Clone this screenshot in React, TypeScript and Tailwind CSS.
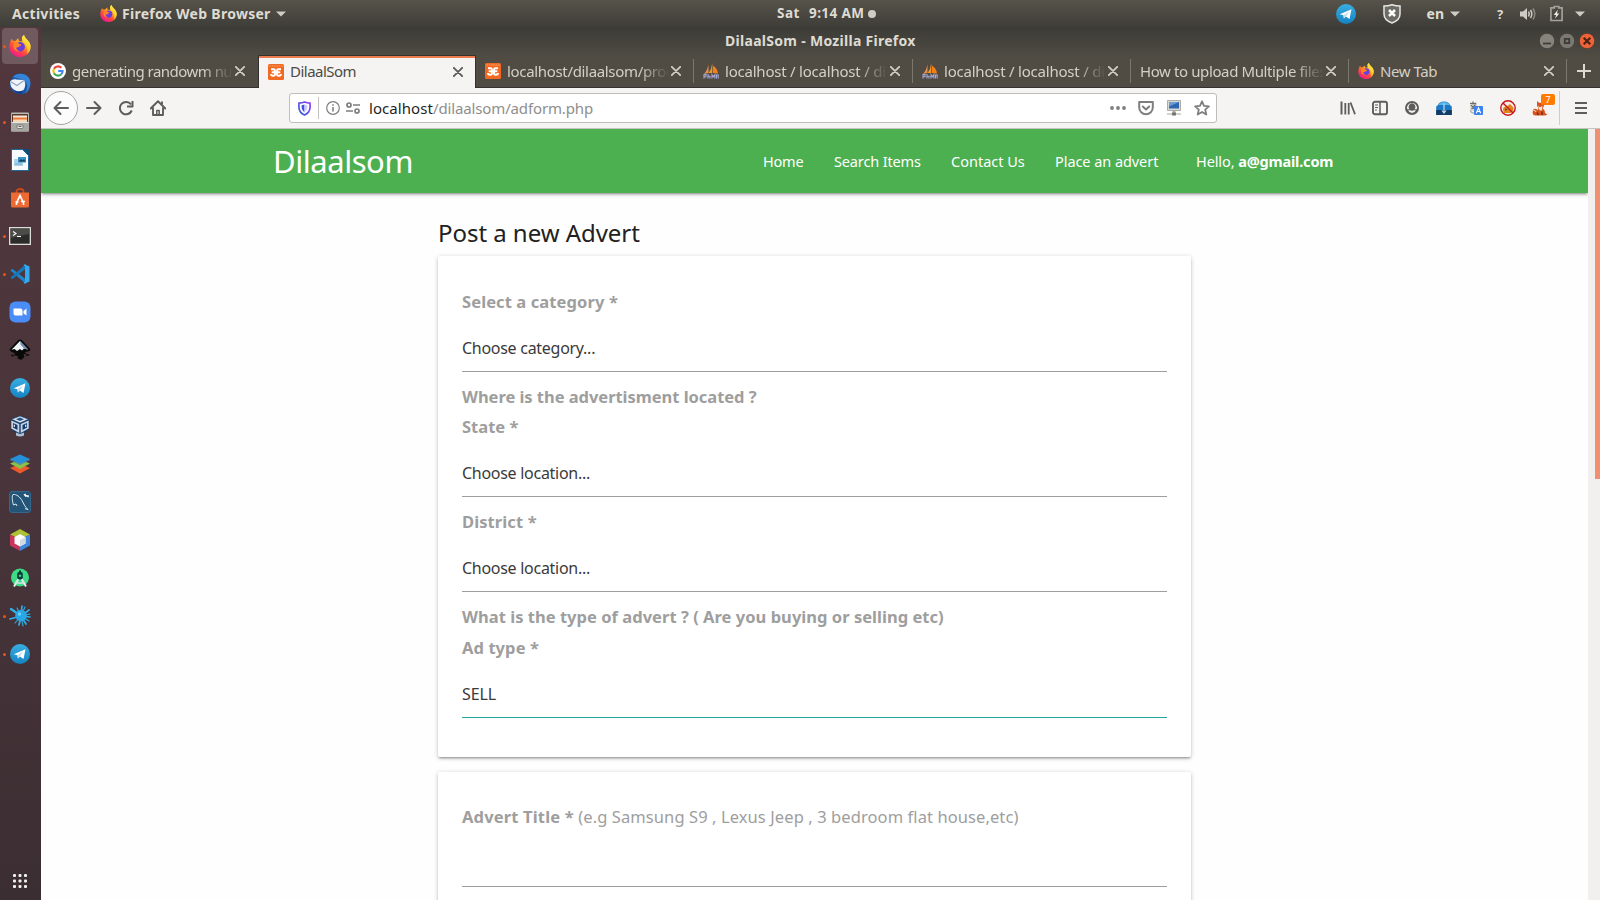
import type { ReactNode } from "react";

type IconProps = { className?: string };

function Firefox({ className = "size-4" }: IconProps) {
  return (
    <svg viewBox="0 0 24 24" className={className}>
      <defs>
        <linearGradient id="fxBody" x1="0.85" y1="0.05" x2="0.25" y2="1">
          <stop offset="0" stopColor="#fff34a" />
          <stop offset="0.35" stopColor="#ffab1f" />
          <stop offset="0.65" stopColor="#ff4a3c" />
          <stop offset="1" stopColor="#f0129b" />
        </linearGradient>
        <linearGradient id="fxWing" x1="0.8" y1="0" x2="0.4" y2="1">
          <stop offset="0" stopColor="#fff44f" />
          <stop offset="0.6" stopColor="#ffcb2c" />
          <stop offset="1" stopColor="#ff8a1c" />
        </linearGradient>
      </defs>
      <path d="M3.2 4.2c.2 1 .6 1.7 1.2 2.3.9-.4 2-.4 3 0C8.200 5 9.200 4 10.600 3.600c-.5 1-.3 2.300.5 3.200h4L14 2.500C15 1.200 15.800.6 16.500.1c.1 2 1.500 3.200 3 4.700 2.600 2.500 4.200 5 4 8.600C23.200 19.500 18.300 24 12.200 24 5.500 24 .3 19 .4 12.700c0-2 .4-3.900 1.300-5.500.1-1.200.7-2.300 1.500-3z" fill="url(#fxBody)" />
      <circle cx="12.300" cy="12.800" r="5.100" fill="#6c3fdc" />
      <path d="M7 8c2 .1 3.300.6 4 1.800 1 .3 2.300.4 2.500.9-.2 1-1.700 1.200-2.400 1.900-.7.800-2 1-3.200.9-.1 2 1.500 3.800 4 4.100-3.700.7-6.900-1.500-7.100-4.900C4.700 10.600 5.500 9 7 8z" fill="#ff8424" />
      <path d="M16.500.1c.1 2 1.500 3.200 3 4.700 2.600 2.500 4.200 5 4 8.600-.2 3.200-1.700 6-4.200 8 1-3 .9-4.500.3-6.400-.1-2.500-1.200-5.300-4-7.200C13.800 6.200 13.200 2.900 16.500.1z" fill="url(#fxWing)" />
    </svg>
  );
}

function Telegram({ className = "size-5" }: IconProps) {
  return (
    <svg viewBox="0 0 24 24" className={className}>
      <defs>
        <linearGradient id="tgBlue" x1="0" y1="0" x2="0" y2="1">
          <stop offset="0" stopColor="#38aee2" />
          <stop offset="1" stopColor="#1583c2" />
        </linearGradient>
      </defs>
      <circle cx="12" cy="12" r="12" fill="url(#tgBlue)" />
      <path d="M4.500 12.200 18.600 6.300 16.200 18l-4.400-3.100-2.300 2.600-.6-4z" fill="#fff" />
      <path d="m8.900 13.500 7.200-4.900-4.300 6.300-2.300 2.600z" fill="#c4dcec" />
    </svg>
  );
}

function Thunderbird() {
  return (
    <svg viewBox="0 0 22 22" className="size-[22px]">
      <path d="M3 5Q5 .5 11 .5q10 .5 10.500 10Q21 20 12.500 21.500 4 21 1 14q-1-5 2-9z" fill="#1b56a8" />
      <path d="M4 4C8-1 17 0 20 5c3 5 1 12-4 16 3-6 3-9 0-13C13 5 8 6 4 4z" fill="#3583d6" />
      <path d="M1 8.500C3 6.500 5 6 7 6.500l8 .5c2 3 1.500 8-1 10.500-5 2-9.500 0-12-4z" fill="#f1f3f6" />
      <path d="m1.500 8.500 6.500 4 7-5" fill="none" stroke="#8ea6c4" strokeWidth="1.100" />
      <path d="M5 17.500c3 1.500 6 1.500 9 0l-1 3.500c-4 .5-6-1-8-3.500z" fill="#123f87" />
    </svg>
  );
}

function Files() {
  return (
    <svg viewBox="0 0 20 20" className="size-5">
      <rect x="1" y=".5" width="18" height="19" rx="1" fill="#b9b9b3" />
      <rect x="2" y="2" width="16" height="8" fill="#5a3a26" />
      <path d="M3 3.500h14V6H3z" fill="#f3e9dc" />
      <path d="M3 5.500h14v3H3z" fill="#ef7a35" />
      <path d="M3 7.500h14V10H3z" fill="#f8d7b5" />
      <rect x="1" y="10" width="18" height="9.500" rx="1" fill="#a8a8a3" />
      <path d="M1.500 10.500h17" stroke="#e4e4e0" />
      <path d="M7 13h6v2.500q0 1-1 1H8q-1 0-1-1z" fill="#e9e9e6" stroke="#6c6c68" strokeWidth=".8" />
      <path d="M8.500 14.500h3" stroke="#62625e" />
    </svg>
  );
}

function Writer() {
  return (
    <svg viewBox="0 0 18 22" className="h-[22px] w-[18px]">
      <path d="M.5.500h11l6 6v15H.5z" fill="#f8fafc" stroke="#1d6a9c" />
      <path d="M11.500 0H18v7z" fill="#0f4c78" />
      <path d="M3 10h9v7H3z" fill="#a8d3ea" />
      <path d="M7 8h8v5.500H7z" fill="#3a93c2" />
      <path d="M7.500 12.500 10 10l1.500 1.500L13 10l1.500 2.500z" fill="#0f3f55" />
      <path d="M4 15h7" stroke="#6caed0" />
    </svg>
  );
}

function Software() {
  return (
    <svg viewBox="0 0 20 20" className="size-5">
      <path d="M6.500 6V3.500Q6.500 1 10 1t3.500 2.500V6" fill="none" stroke="#c8481a" strokeWidth="1.800" />
      <path d="M1 4.500h18V18q0 1.500-1.500 1.500h-15Q1 19.500 1 18z" fill="#ee6a33" />
      <path d="M6.500 15 10 7.500l3.500 7.500" fill="none" stroke="#fff" strokeWidth="1.700" />
      <path d="M5.500 14h3M11 13.500h4" stroke="#fff" strokeWidth="1.500" />
      <circle cx="6.500" cy="16" r="1" fill="#fff" /><circle cx="13.500" cy="16" r="1" fill="#fff" />
    </svg>
  );
}

function Terminal() {
  return (
    <svg viewBox="0 0 22 18" className="h-[18px] w-[22px]">
      <rect x=".5" y=".5" width="21" height="17" fill="#2c2c2a" stroke="#deded8" strokeWidth="1.600" />
      <path d="M2 2h18v5L2 11z" fill="#4b4b48" />
      <path d="m4 4.500 3 2-3 2M8 9.500h4" fill="none" stroke="#fff" strokeWidth="1.100" />
    </svg>
  );
}

function VsCode() {
  return (
    <svg viewBox="0 0 20 20" className="size-5">
      <path d="m.5 6.500 1.800-1.700L16 15.500V20z" fill="#1b87cf" />
      <path d="M.5 13.500 2.300 15.200 16 4.500V0z" fill="#1677b8" />
      <path d="M14.500.3 19.500 2.500v15l-5 2.200-1-.8 1.500-1.500v-15L13.500 1z" fill="#35a9f0" />
    </svg>
  );
}

function Zoom() {
  return (
    <svg viewBox="0 0 22 22" className="size-[22px]">
      <rect x=".5" y=".5" width="21" height="21" rx="6" fill="#4a8df8" />
      <path d="M4.500 7.500h7q2 0 2 2v5h-7q-2 0-2-2zM14.500 10l3-2.500v7l-3-2z" fill="#fff" />
    </svg>
  );
}

function Inkscape() {
  return (
    <svg viewBox="0 0 22 22" className="size-[22px]">
      <path d="M11 .5q1.500 0 2.500 1.200l7.500 8q1 1.800-1.500 2.600l-4 1 2.500 1.300-3.500 1 1 2.400L12 21l-4-2 1.500-1.500-5-1.500 2-1.200-4-2Q-.2 11.500 1 9.700l7.500-8Q9.500.5 11 .5z" fill="#090909" />
      <path d="M11 2 19 10.500l-4-1-2 2-2-1.500-3 2-2.500-2-3 .8z" fill="#eef2f6" />
      <path d="M11 2 19 10.500l-4-1-3.500-4z" fill="#6f8db0" />
      <ellipse cx="18.500" cy="16" rx="2" ry="1" fill="#111" />
      <ellipse cx="3.500" cy="16.500" rx="1.500" ry=".9" fill="#111" />
    </svg>
  );
}

function VirtualBox() {
  return (
    <svg viewBox="0 0 20 22" className="h-[22px] w-5">
      <path d="M10 .5 19 4v10l-9 7.500L1 14V4z" fill="#173a67" />
      <path d="M10 1 18.500 4.300 10 8 1.500 4.300z" fill="#dbe5f1" stroke="#173a67" strokeWidth=".6" />
      <path d="m6 4.300 4-1.700 4 1.700L10 6z" fill="#28517f" />
      <path d="M1.300 5.500 9.300 9v9L1.300 13.500zM18.700 5.500 10.700 9v9l8-4.500z" fill="#c6d6e8" />
      <path d="m3 8 4.500 2v5L3 12.500zM12.500 10 17 8v4.500L12.500 15z" fill="#173a67" />
      <path d="M4.300 9.800v2M15.700 9.800v2" stroke="#fff" strokeWidth="1.200" />
      <path d="M6 17.500 10 19l4-1.500v3q-4 2-8 0z" fill="#aebfd3" />
    </svg>
  );
}

function Stacks() {
  return (
    <svg viewBox="0 0 20 20" className="size-5">
      <path d="m0 14 10-4 10 4-10 5.500z" fill="#ee5a29" />
      <path d="m0 9.500 10-4 10 4-10 5.500z" fill="#8cc04b" />
      <path d="M0 5 10 .5 20 5l-10 5z" fill="#2490dc" />
      <path d="m0 5 10 5 10-5v1l-10 5L0 6z" fill="#4d83a9" />
    </svg>
  );
}

function Workbench() {
  return (
    <svg viewBox="0 0 22 22" className="size-[22px]">
      <rect x=".5" y=".5" width="21" height="21" rx="2.500" fill="#245478" stroke="#34678c" />
      <path d="M4.500 14C3 9 2.800 5 4 3.500 7.500 3 11 6 13 9.500s2.500 6 6 9l-3-.8M4.500 14l2.500-1 1 2" fill="none" stroke="#dde9f1" strokeWidth="1" />
      <path d="m14.500 3.500 2-1 .5 1.500 3 .5-.5 2-2-1-1 .5z" fill="#fff" />
    </svg>
  );
}

function NetBeans() {
  return (
    <svg viewBox="0 0 20 22" className="h-[22px] w-5">
      <path d="M10 0 20 5.500 15 8l-5-2.500L5 8 0 5.500z" fill="#adc335" />
      <path d="M0 5.500 5 8v6.500l5 2.500v5L0 16.500z" fill="#c8355d" />
      <path d="M20 5.500 15 8v6.500L10 17v5l10-5.500z" fill="#3f87dd" />
      <path d="m10 5 5.500 3v6.500L10 17.500l-5.500-3V8z" fill="#fbfbfb" />
      <path d="M10 11v6.500l5.500-3V8z" fill="#d4dbe0" />
    </svg>
  );
}

function AndroidStudio() {
  return (
    <svg viewBox="0 0 20 20" className="size-5">
      <circle cx="10" cy="9.500" r="9" fill="#3ddc84" />
      <path d="m9 10-5 8.500M11 10l5 8.500" stroke="#e4eef2" strokeWidth="2" />
      <path d="M5.500 14q4.500 2.500 9 0" fill="none" stroke="#cfe0e6" strokeWidth="1.500" />
      <rect x="7.200" y="4" width="5.600" height="7.500" rx="2" fill="#083b3d" />
      <path d="M9 2.500h2v2H9z" fill="#083b3d" />
      <circle cx="10" cy="7.800" r="1.200" fill="#3ddc84" />
    </svg>
  );
}

function Splat() {
  return (
    <svg viewBox="0 0 22 22" className="size-[22px]">
      <g stroke="#2fb0e8" strokeLinecap="round">
        <path d="m12 11-10-7" strokeWidth="2.400" />
        <path d="M12 11 1 14M12 11l8-6M12 11l9 1M12 11l1-10M12 11l5 8M12 11l-2 9" strokeWidth="1.700" />
        <path d="m12 11-6 7M12 11 8 3M12 11l9-2M12 11l8 5M12 11l4-9M12 11l2 10" strokeWidth="1.100" />
      </g>
      <circle cx="12" cy="10.500" r="5.800" fill="#27a7e6" />
      <circle cx="10.500" cy="9" r="1.800" fill="#6bcbf5" />
    </svg>
  );
}

function Grid() {
  return (
    <svg viewBox="0 0 14 14" className="size-[14px]" fill="#f2f1ee">
      {[0, 5.5, 11].map((y) => [0, 5.5, 11].map((x) => <rect key={`${x}-${y}`} x={x} y={y} width="3" height="3" rx="1" />))}
    </svg>
  );
}

function Google() {
  return (
    <svg viewBox="0 0 16 16" className="size-4">
      <circle cx="8" cy="8" r="8" fill="#fff" />
      <g fill="none" strokeWidth="2.100">
        <path d="M4 5.700a4.600 4.600 0 0 1 7.300-.9" stroke="#ea4335" />
        <path d="M4 10.300a4.600 4.600 0 0 1 0-4.600" stroke="#fbbc05" />
        <path d="M11 11.500a4.600 4.600 0 0 1-7-1.200" stroke="#34a853" />
        <path d="M8.200 8h4.400q0 2.200-1.600 3.500" stroke="#4285f4" />
      </g>
    </svg>
  );
}

function Xampp() {
  return (
    <svg viewBox="0 0 16 16" className="size-4">
      <rect width="16" height="16" rx="1.500" fill="#f26a21" />
      <path d="M1.500 2h13" stroke="#fba36f" strokeDasharray="1.500 .8" />
      <g fill="none" stroke="#fff" strokeWidth="1.900" strokeLinejoin="round">
        <path d="M3 5.300h2.600q1.400 0 1.400 1.500T5.600 8.300H4.500h1.100Q7 8.300 7 10t-1.400 1.700H5Q3 11.700 3 10" />
        <path d="M13 5.300h-2.600Q9 5.300 9 6.800t1.400 1.500h1.100-1.100Q9 8.300 9 10t1.400 1.700h.6q2 0 2-1.700" />
        <path d="M7 8.300h2" />
      </g>
    </svg>
  );
}

function PhpMyAdmin() {
  return (
    <svg viewBox="0 0 16 16" className="size-4">
      <path d="M5.500 1.500V10L1 11q3-3 4.500-9.500z" fill="#e0924e" />
      <path d="M9.300 0v10H5.600Q8.500 6 9.300 0z" fill="#f79421" />
      <path d="M10 2.500q4.500 3 5 8l-5-.5z" fill="#f57f17" />
      <path d="M1 15.500v-4h2v2.300H1M5 11v4.500M5 13.200h2v2.300M9 15.500v-3.800l1.400 2 1.500-2v3.800M13.500 15.500v-3.500h1.700v3.500" fill="none" stroke="#a9a9d8" strokeWidth="1.100" />
    </svg>
  );
}

function Close({ className = "text-[#d0cdc4]" }: IconProps) {
  return (
    <svg viewBox="0 0 10 10" className={`size-[10px] shrink-0 ${className}`} stroke="currentColor" strokeWidth="1.800" strokeLinecap="round">
      <path d="m.8.800 8.400 8.400M9.200.800.8 9.200" />
    </svg>
  );
}

function Caret() {
  return (
    <svg viewBox="0 0 10 6" className="h-[6px] w-[10px]" fill="#cfccc4"><path d="M0 .5h10L5 5.500z" /></svg>
  );
}

const dock: { name: string; icon: ReactNode; running?: boolean; active?: boolean }[] = [
  { name: "firefox", icon: <Firefox className="size-[22px]" />, running: true, active: true },
  { name: "thunderbird", icon: <Thunderbird /> },
  { name: "files", icon: <Files />, running: true },
  { name: "writer", icon: <Writer /> },
  { name: "software", icon: <Software /> },
  { name: "terminal", icon: <Terminal />, running: true },
  { name: "code", icon: <VsCode />, running: true },
  { name: "zoom", icon: <Zoom /> },
  { name: "inkscape", icon: <Inkscape /> },
  { name: "telegram", icon: <Telegram /> },
  { name: "virtualbox", icon: <VirtualBox /> },
  { name: "stacks", icon: <Stacks /> },
  { name: "workbench", icon: <Workbench /> },
  { name: "netbeans", icon: <NetBeans /> },
  { name: "android", icon: <AndroidStudio /> },
  { name: "splat", icon: <Splat />, running: true },
  { name: "telegram-beta", icon: <Telegram />, running: true },
];

function Dock() {
  return (
    <aside className="flex w-[41px] shrink-0 flex-col gap-[2px] bg-linear-to-b from-[#52373d] via-[#49353b] to-[#3b2e32] pt-px">
      {dock.map((d) => (
        <div key={d.name} className="flex h-9 items-center pl-[2px]">
          <div className={`flex h-9 w-9 items-center justify-center rounded ${d.active ? "bg-[#705a60]" : ""}`}>
            <span className={`-ml-px mr-[4px] size-[3px] shrink-0 rounded-full ${d.running ? "bg-[#e9541f]" : ""}`} />
            <span className="-ml-[1px] flex w-[22px] shrink-0 items-center justify-center">{d.icon}</span>
            <span className="w-[6px] shrink-0" />
          </div>
        </div>
      ))}
      <div className="mt-auto mb-[12px] flex pl-[13px]"><Grid /></div>
    </aside>
  );
}

function TopBar() {
  return (
    <header className="flex h-[27px] items-center bg-linear-to-b from-[#57534a] to-[#3e3d38] text-sm font-bold text-[#dedbd2]">
      <div className="flex w-[777px] items-center pl-3">
        <span className="w-[88px] tracking-[0.3px]">Activities</span>
        <Firefox className="size-[17px]" />
        <span className="ml-[5px] mr-[5px] tracking-[0.28px]">Firefox Web Browser</span>
        <Caret />
      </div>
      <div className="flex items-center text-[13.5px]">
        <span className="w-8 tracking-[0.5px]">Sat</span>
        <span className="tracking-[0.42px]">9:14 AM</span>
        <span className="ml-[4px] size-2 rounded-full bg-[#cfccc4]" />
      </div>
      <div className="ml-auto flex items-center pr-[15px]">
        <Telegram className="mr-[27px] size-5" />
        <svg viewBox="0 0 18 20" className="mr-[26px] h-5 w-[18px]">
          <path d="M1 2q4 0 8-1.300Q13 2 17 2v8q0 6-8 9-8-3-8-9z" fill="#6c6b66" stroke="#e8e6e0" strokeWidth="1.500" />
          <path d="m6 6 6 6M12 6l-6 6" stroke="#fff" strokeWidth="2.500" />
        </svg>
        <span className="mr-[6px]">en</span>
        <Caret />
        <span className="ml-[37px] mr-[15px] w-2 pt-[2px] text-[13px]">?</span>
        <svg viewBox="0 0 16 14" className="mr-[14px] h-[14px] w-4" fill="none" stroke="#cfccc4" strokeWidth="1.500">
          <path d="M0 4.500h3L7 1v12L3 9.500H0z" fill="#cfccc4" stroke="none" />
          <path d="M8.500 4.500q1.500 2.500 0 5M10.500 3q2.600 4 0 8" />
          <path d="M13 1.500q3.500 5.500 0 11" stroke="#8b8982" />
        </svg>
        <svg viewBox="0 0 14 17" className="mr-[12px] h-[17px] w-[13px]">
          <path d="M4.500 2.500V1h5v1.500H13V16H1V2.500z" fill="none" stroke="#a3a19a" strokeWidth="1.800" />
          <path d="M8.500 4.500 4 10h2.500L5.500 14 10 8.500H7.500z" fill="#efede8" />
        </svg>
        <Caret />
      </div>
    </header>
  );
}

function WindowTitle() {
  return (
    <div className="flex h-[28px] items-center text-sm font-bold text-[#dedbd2]">
      <div className="w-[684px]" />
      <span className="tracking-[0.29px]">DilaalSom - Mozilla Firefox</span>
      <div className="ml-auto flex gap-1 pr-[5px]">
        <svg viewBox="0 0 16 16" className="size-4"><circle cx="8" cy="8" r="7.700" fill="#85837b" stroke="#33322e" strokeWidth=".6" /><path d="M4 10.500h8" stroke="#3b3a36" strokeWidth="1.700" /></svg>
        <svg viewBox="0 0 16 16" className="size-4"><circle cx="8" cy="8" r="7.700" fill="#7a7871" stroke="#33322e" strokeWidth=".6" /><path d="M5.800 5.800h4.400v4.400H5.800z" fill="none" stroke="#3b3a36" strokeWidth="1.800" /></svg>
        <svg viewBox="0 0 16 16" className="size-4"><circle cx="8" cy="8" r="7.700" fill="#ee6338" stroke="#33322e" strokeWidth=".6" /><path d="m4.700 4.700 6.600 6.600M11.300 4.700l-6.600 6.600" stroke="#4a2312" strokeWidth="2.200" /></svg>
      </div>
    </div>
  );
}

const tabs: { icon: ReactNode; text: string; tracking: string; width: string; active?: boolean; divider?: boolean; fade?: boolean }[] = [
  { icon: <Google />, text: "generating randowm number", tracking: "tracking-[-0.53px]", width: "w-[217px]", fade: true },
  { icon: <Xampp />, text: "DilaalSom", tracking: "tracking-[-0.52px]", width: "w-[218px]", active: true },
  { icon: <Xampp />, text: "localhost/dilaalsom/process", tracking: "tracking-[-0.33px]", width: "w-[218px]", divider: true, fade: true },
  { icon: <PhpMyAdmin />, text: "localhost / localhost / dilaal", tracking: "tracking-[-0.22px]", width: "w-[219px]", divider: true, fade: true },
  { icon: <PhpMyAdmin />, text: "localhost / localhost / dilaal", tracking: "tracking-[-0.22px]", width: "w-[218px]", divider: true, fade: true },
  { icon: null, text: "How to upload Multiple files in", tracking: "tracking-[-0.39px]", width: "w-[218px]", divider: true, fade: true },
  { icon: <Firefox />, text: "New Tab", tracking: "tracking-[-0.43px]", width: "w-[218px]", divider: true },
];

function TabStrip() {
  return (
    <div className="flex h-[33px] items-stretch text-[15px]">
      {tabs.map((t, i) => (
        <div
          key={i}
          className={`flex shrink-0 items-center ${t.width} ${
            t.active
              ? "border-x border-t border-[#33322e] bg-[#f5f4f2] pl-[9px] text-[#4c4a45] shadow-[inset_0_2px_0_#ee7b50]"
              : "border-b border-[#33322e] pl-[9px] text-[#d3d0c6]"
          }`}
        >
          {t.icon && <span className="mr-[6px] shrink-0">{t.icon}</span>}
          <span
            className={`w-0 flex-1 overflow-hidden whitespace-nowrap ${t.tracking} ${t.active ? "-mt-px" : ""} ${t.fade ? "[mask-image:linear-gradient(to_right,black_calc(100%-30px),transparent)]" : ""}`}
          >
            {t.text}
          </span>
          <Close className={t.active ? "ml-[4px] mr-[11px] text-[#5c5a55]" : "ml-[2px] mr-[12px] text-[#d0cdc4]"} />
          <span className={`h-6 w-px ${t.divider ? "bg-[#7a776e]" : ""}`} />
        </div>
      ))}
      <div className="flex flex-1 items-center justify-center border-b border-[#33322e]">
        <svg viewBox="0 0 14 14" className="size-[14px]" stroke="#dcd9d0" strokeWidth="2"><path d="M7 0v14M0 7h14" /></svg>
      </div>
    </div>
  );
}

function Toolbar() {
  return (
    <div className="flex h-[41px] shrink-0 items-center border-b border-[#c6c4c1] bg-[#f5f4f2] text-[#5d5d5b]">
      <div className="flex w-[248px] items-center pl-[3px]">
        <span className="flex size-[34px] items-center justify-center rounded-full border border-[#a5a4a2] bg-[#fcfcfc]">
          <svg viewBox="0 0 16 16" className="size-4" fill="none" stroke="currentColor" strokeWidth="2" strokeLinecap="round" strokeLinejoin="round"><path d="M15 8H1.500M7.500 2l-6 6 6 6" /></svg>
        </span>
        <svg viewBox="0 0 16 16" className="ml-2 size-4" fill="none" stroke="currentColor" strokeWidth="2" strokeLinecap="round" strokeLinejoin="round"><path d="M1 8h13.500M8.500 2l6 6-6 6" /></svg>
        <svg viewBox="0 0 16 16" className="ml-4 size-4" fill="none" stroke="currentColor" strokeWidth="2"><path d="M13.800 10.500a6.200 6.200 0 1 1-.8-6.200" /><path d="M14.500 1v5.500H9" strokeLinejoin="round" /></svg>
        <svg viewBox="0 0 16 16" className="ml-4 size-4" fill="none" stroke="currentColor" strokeWidth="1.900" strokeLinejoin="round"><path d="M.7 8.500 8 1.300l7.300 7.200M3 8v7h10V8" strokeLinecap="round" /><path d="M6.800 15v-4.500h2.400V15" strokeWidth="1.500" /><path d="M12 1.500v3" /></svg>
      </div>
      <div className="flex h-[30px] w-[928px] items-center rounded-[3px] border border-[#c0bebb] bg-white">
        <svg viewBox="0 0 14 16" className="ml-2 h-[15px] w-[13px]">
          <defs><linearGradient id="sh" x1="1" y1="0" x2="0" y2="1"><stop offset="0" stopColor="#9a3df5" /><stop offset="1" stopColor="#2b5fe0" /></linearGradient></defs>
          <path d="M1 2.300q3.500-.2 6-1.300 2.500 1.100 6 1.300V7q-.5 5.500-6 8-5.500-2.500-6-8z" fill="none" stroke="url(#sh)" strokeWidth="1.800" />
          <path d="M7 3.800v8.500Q4 10 3.900 7V4.600z" fill="#4b4be4" /><path d="M7 3.800v8.500Q10 10 10.100 7V4.600z" fill="#c9d0f7" />
        </svg>
        <span className="mx-[7px] h-[22px] w-px bg-[#c4c3c1]" />
        <svg viewBox="0 0 14 14" className="size-[14px]" fill="none" stroke="#7f7e7d" strokeWidth="1.200"><circle cx="7" cy="7" r="6.300" /><path d="M7 6v4.500" strokeWidth="1.600" /><path d="M7 3.200v1.600" strokeWidth="1.600" /></svg>
        <svg viewBox="0 0 14 12" className="ml-[6px] h-3 w-[14px]" fill="none" stroke="#7f7e7d" strokeWidth="1.700"><circle cx="3" cy="3" r="2" /><path d="M7 3h7M0 9h7" /><circle cx="11" cy="9" r="2" /></svg>
        <span className="ml-[9px] text-[15px] tracking-[0.07px] text-[#1f1f1f]">localhost<span className="tracking-[-0.14px] text-[#8f8e8d]">/dilaalsom/adform.php</span></span>
        <div className="ml-auto mr-[6px] flex items-center gap-3 text-[#7f7e7d]">
          <svg viewBox="0 0 16 16" className="size-4" fill="currentColor"><circle cx="2" cy="8" r="1.900" /><circle cx="8" cy="8" r="1.900" /><circle cx="14" cy="8" r="1.900" /></svg>
          <svg viewBox="0 0 16 16" className="size-4" fill="none" stroke="currentColor" strokeWidth="2" strokeLinecap="round" strokeLinejoin="round"><path d="M1.200 2h13.600v5.500a6.800 6.800 0 0 1-13.600 0z" /><path d="M4.800 6.500 8 9.500l3.200-3" /></svg>
          <svg viewBox="0 0 16 16" className="size-4"><path d="M1.500.5h13v10h-13z" fill="#d9d8d2" stroke="#9c9b96" strokeWidth=".8" /><path d="M3 2h10v6.500H3z" fill="#2f66b0" /><path d="M3 2h10L3 6.500z" fill="#6d9bd6" /><path d="M6.500 10.500h3V13h-3z" fill="#aaa9a4" /><path d="M1 13.500h14v1H1z" fill="#a5a49f" /><path d="M6 12.500h4v3H6z" fill="#77766f" /></svg>
          <svg viewBox="0 0 16 16" className="size-4" fill="none" stroke="currentColor" strokeWidth="1.800" strokeLinejoin="round"><path d="m8 1.300 2 4.500 4.900.5-3.700 3.300 1.100 4.900L8 12l-4.300 2.500 1.100-4.900L1.100 6.300 6 5.800z" /></svg>
        </div>
      </div>
      <div className="ml-auto flex items-center gap-4">
        <svg viewBox="0 0 16 16" className="size-4" fill="none" stroke="currentColor"><path d="M1.500 1.500v13" strokeWidth="2" /><path d="M5.300 3v11.500M8.700 3v11.500M10.500 2.500 15 14.300" strokeWidth="1.800" /></svg>
        <svg viewBox="0 0 16 16" className="size-4" fill="none" stroke="currentColor" strokeWidth="1.900"><rect x="1" y="1.800" width="14" height="12.400" rx="2" /><path d="M8 2v12" strokeWidth="1.500" /><path d="M3 5h3M3 7.500h3M3 10h2" strokeWidth="1" /></svg>
        <svg viewBox="0 0 16 16" className="size-4"><circle cx="8" cy="8" r="7" fill="currentColor" /><path d="M2.900 8a5.100 5.100 0 0 1 10.200 0q0 1-.8 1.200-1.200.2-1.800 0A3.300 3.300 0 1 0 5.500 9.200q-.6.2-1.800 0Q2.900 9 2.900 8z" fill="#f5f4f2" /><circle cx="8" cy="6.300" r="2.900" fill="currentColor" /><path d="M4 10q1.200.6 2.300.2Q8 11.300 9.700 10.200q1.100.4 2.300-.2-1 2.800-4 2.900-3-.1-4-2.900z" fill="#f5f4f2" /></svg>
        <svg viewBox="0 0 16 16" className="size-4"><path d="M2 5Q3 1.500 8 1.500T14 5l1.800 1.500V15H.2V6.500z" fill="#1f78c4" /><path d="M2 5Q4 2 8 2t6 3z" fill="#57b6e8" /><path d="M.2 10h15.600v5H.2z" fill="#123c66" /><path d="M8 3.500v9M6 10.500 8 13l2-2.500" fill="none" stroke="#b5dcf2" strokeWidth="1.200" /></svg>
        <svg viewBox="0 0 16 16" className="size-4"><path d="M2 2h7v9H2z" fill="#dedbd4" /><path d="M2 3.500h6M5 1.500v3M3.500 9l4-4.500M3 5l3 4" stroke="#6c6b68" strokeWidth="1.200" /><path d="M2.500 10q0 3 3.500 3" fill="none" stroke="#b9b7b2" strokeWidth="1.500" /><rect x="6" y="6" width="9" height="9" rx=".8" fill="#3d83ee" /><path d="m8.300 13.200 2.200-5.200 2.200 5.200M9.100 11.500h2.800" fill="none" stroke="#fff" strokeWidth="1.100" /></svg>
        <svg viewBox="0 0 16 16" className="size-4"><circle cx="8" cy="8" r="7.300" fill="#f4ece5" /><path d="M3 10q0-4 3.500-3.500L10 4l3.500 3.500q0 4.500-3 5.500H4z" fill="#e18422" /><circle cx="6" cy="9.500" r="1" fill="#6b3b12" /><circle cx="8" cy="8" r="7.200" fill="none" stroke="#c9141c" strokeWidth="1.400" /><path d="m3 3 10 10" stroke="#c9141c" strokeWidth="1.400" /></svg>
        <span className="relative size-4">
          <svg viewBox="0 0 16 16" className="size-4"><path d="m5 1 2 1.800h2.500L12 1v5l-1.500 2.500q2.500 1 2.500 4.500l2.500 1.500L13 15.500H3Q0 15 .8 11q.7-3 3.200-2l2 1L6.500 8 5 6z" fill="#d9531e" /><path d="M6 5.500 8 7.500 10.500 5.500 9.500 11 7.500 10z" fill="#fbe9dc" /><path d="M1.500 10.500q2-.5 2.500 1.500" fill="none" stroke="#fbe0cc" /><path d="M5 12.500 6.500 15M10 11.500V15" stroke="#5e2311" strokeWidth="1.200" /></svg>
          <span className="absolute -top-[6px] left-[9px] flex h-[11px] w-[14px] items-center justify-center rounded-[2px] bg-[#ff7a00] text-[9.500px] leading-none text-white">7</span>
        </span>
        <div className="-ml-[5px] flex items-center">
          <span className="h-[34px] w-px bg-[#cfcdca]" />
          <svg viewBox="0 0 12 14" className="ml-[15px] mr-[13px] h-[14px] w-3" stroke="currentColor" strokeWidth="2"><path d="M0 2h12M0 7h12M0 12h12" /></svg>
        </div>
      </div>
    </div>
  );
}

function SiteNav() {
  return (
    <nav className="flex h-16 items-center bg-[#4caf50] text-[14.500px] text-white shadow-[0_2px_2px_0_rgba(0,0,0,0.14),0_3px_1px_-2px_rgba(0,0,0,0.12),0_1px_5px_0_rgba(0,0,0,0.2)]">
      <span className="w-[722px] pl-[232px] text-[31px] tracking-[-0.45px]">Dilaalsom</span>
      <span className="w-[71px] pt-[2px] tracking-[-0.2px]">Home</span>
      <span className="w-[117px] pt-[2px] tracking-[-0.14px]">Search Items</span>
      <span className="w-[104px] pt-[2px]">Contact Us</span>
      <span className="w-[141px] pt-[2px] tracking-[-0.06px]">Place an advert</span>
      <span className="pt-[2px] tracking-[-0.1px]">Hello, <b className="tracking-[-0.18px]">a@gmail.com</b></span>
    </nav>
  );
}

function Label({ children, tall }: { children: ReactNode; tall?: boolean }) {
  return <div className={`flex items-center whitespace-pre text-[16.500px] font-bold text-[#9e9e9e] ${tall ? "h-[31px] pt-px" : "h-[30px]"}`}>{children}</div>;
}

function Select({ value, active }: { value: string; active?: boolean }) {
  return (
    <div className={`mt-2 flex h-[47px] items-center border-b text-[16px] text-[#3a3a3a] ${active ? "border-[#26a69a] tracking-[-0.11px]" : "mb-[10px] border-[#9e9e9e] tracking-[-0.28px]"}`}>
      {value}
    </div>
  );
}

const card = "w-[753px] rounded-[2px] bg-white px-6 shadow-[0_2px_2px_0_rgba(0,0,0,0.14),0_3px_1px_-2px_rgba(0,0,0,0.12),0_1px_5px_0_rgba(0,0,0,0.2)]";

function AdForm() {
  return (
    <main className="pl-[397px]">
      <h1 className="mt-[22px] flex h-9 items-center text-2xl tracking-[-0.04px] text-[#212121]">Post a new Advert</h1>
      <section className={`${card} mt-[5px] pt-[31px] pb-[39px]`}>
        <Label><span className="tracking-[0.1px]">Select a category *</span></Label>
        <Select value="Choose category..." />
        <Label><span className="tracking-[-0.04px]">Where is the advertisment located ?</span></Label>
        <Label>State *</Label>
        <Select value="Choose location..." />
        <Label><span className="tracking-[0.1px]">District *</span></Label>
        <Select value="Choose location..." />
        <Label><span className="tracking-[0.03px]">What is the type of advert ? ( Are you buying or selling etc)</span></Label>
        <Label tall><span className="tracking-[0.08px]">Ad type *</span></Label>
        <Select value="SELL" active />
      </section>
      <section className={`${card} mt-[15px] h-[200px] pt-[30px]`}>
        <Label><span className="tracking-[0.16px]">Advert Title * </span><span className="font-normal tracking-[0.09px]">(e.g Samsung S9 , Lexus Jeep , 3 bedroom flat house,etc)</span></Label>
        <div className="h-[55px] border-b border-[#9e9e9e]" />
      </section>
    </main>
  );
}

export default function App() {
  return (
    <div className="flex h-[900px] w-[1600px] flex-col overflow-hidden font-['Noto_Sans',sans-serif]">
      <TopBar />
      <div className="flex min-h-0 flex-1">
        <Dock />
        <div className="flex min-w-0 flex-1 flex-col">
          <div className="shrink-0 bg-linear-to-b from-[#3c3b37] via-[#504c44] to-[#504c44]">
            <WindowTitle />
            <TabStrip />
          </div>
          <Toolbar />
          <div className="flex min-h-0 flex-1">
            <div className="min-w-0 flex-1 overflow-hidden bg-[#fefefe]">
              <SiteNav />
              <AdForm />
            </div>
            <div className="flex w-3 justify-end bg-[#f1f0ee]">
              <div className="h-[350px] w-[5px] bg-[#f09070]" />
            </div>
          </div>
        </div>
      </div>
    </div>
  );
}
